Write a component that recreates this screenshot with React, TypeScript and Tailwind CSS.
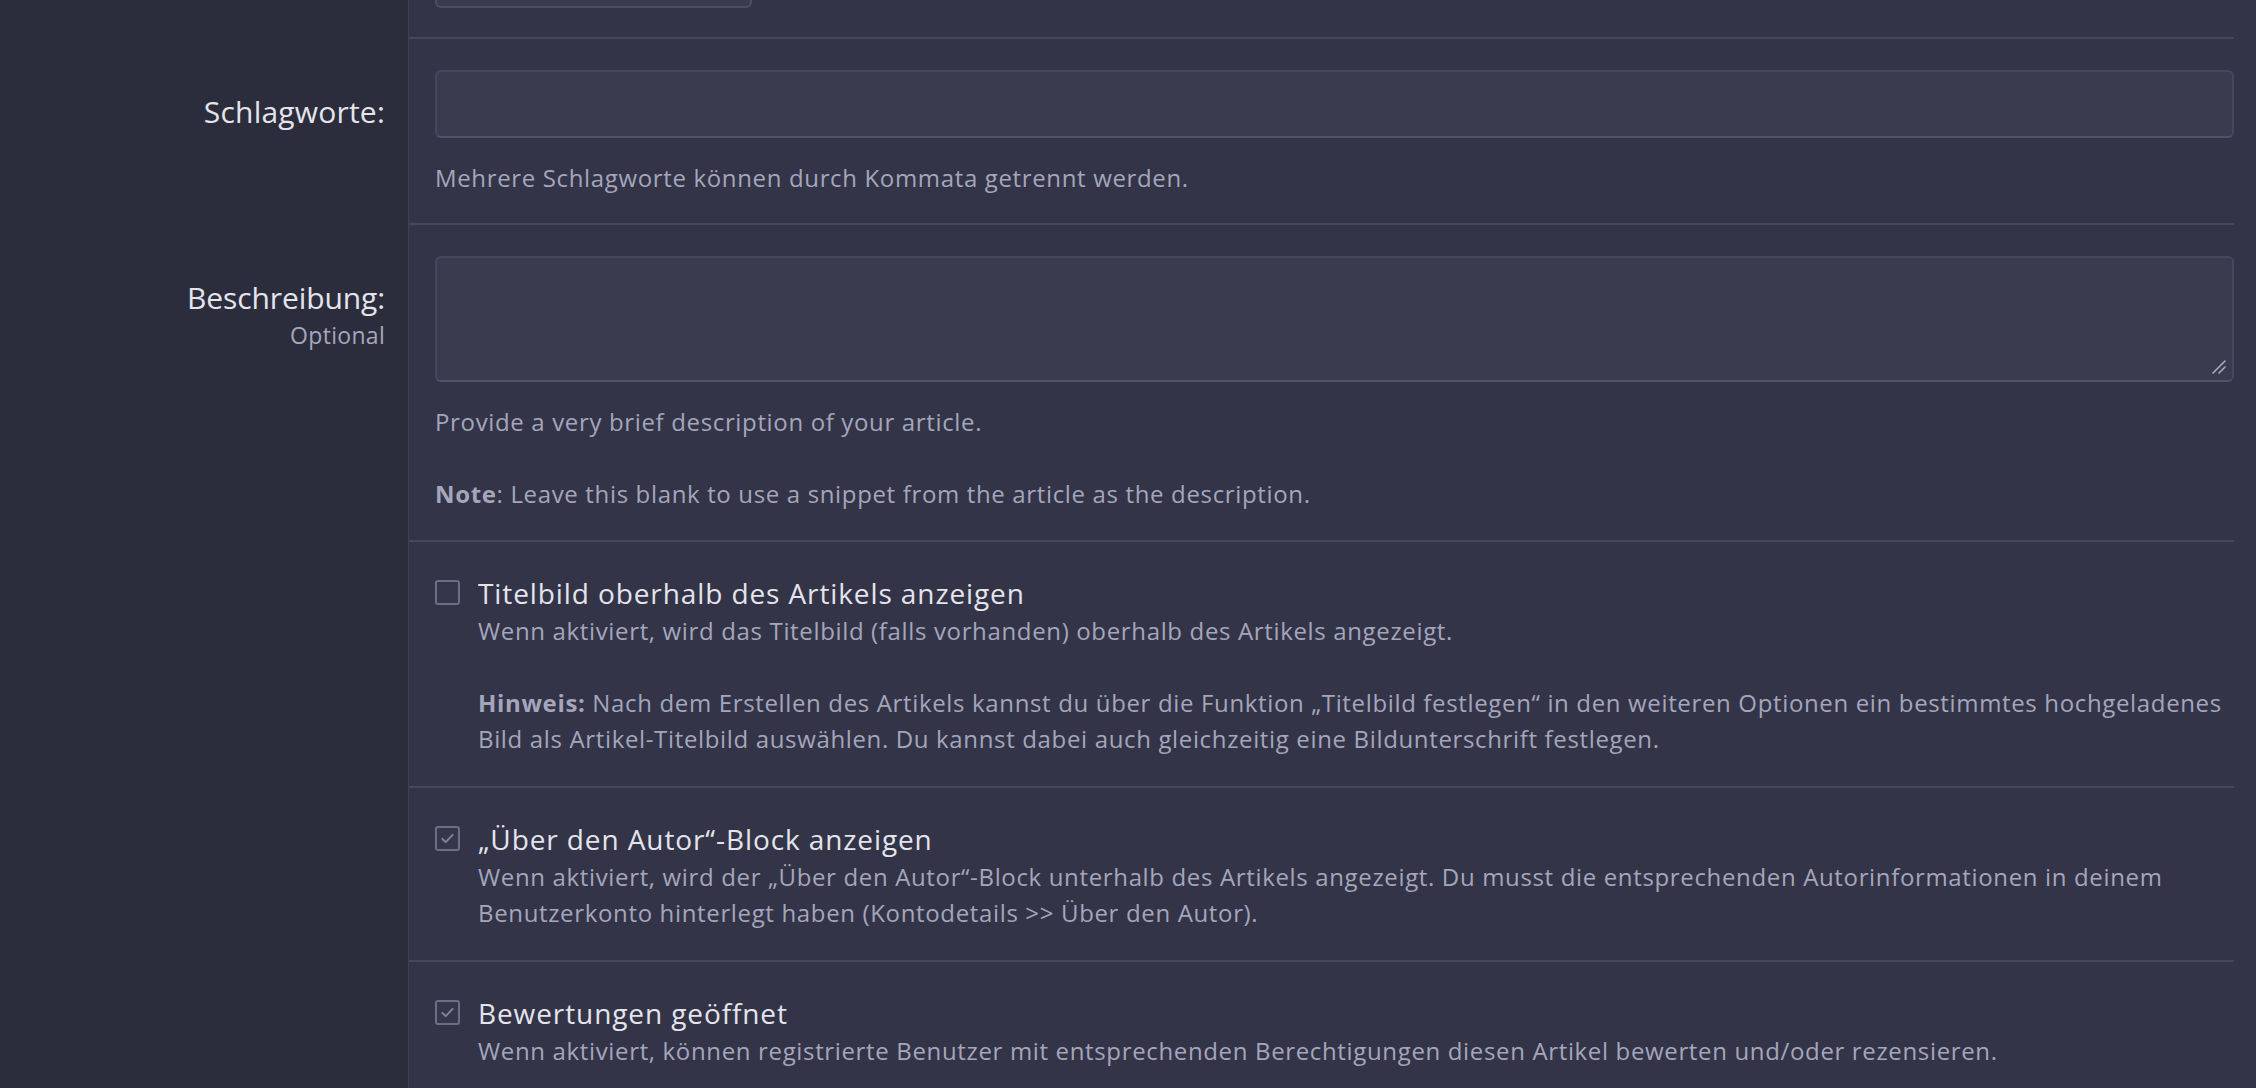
import type { ReactNode } from 'react';

const font = { fontFamily: '"Open Sans", Lato, sans-serif' };

interface OptionRow {
  title: string;
  checked: boolean;
  body: ReactNode;
}

const options: OptionRow[] = [
  {
    title: 'Titelbild oberhalb des Artikels anzeigen',
    checked: false,
    body: (
      <>
        Wenn aktiviert, wird das Titelbild (falls vorhanden) oberhalb des Artikels angezeigt.
        <br />
        <br />
        <b className="font-bold">Hinweis:</b> Nach dem Erstellen des Artikels kannst du über die Funktion
        „Titelbild festlegen“ in den weiteren Optionen ein bestimmtes hochgeladenes Bild als
        Artikel-Titelbild auswählen. Du kannst dabei auch gleichzeitig eine Bildunterschrift festlegen.
      </>
    ),
  },
  {
    title: '„Über den Autor“-Block anzeigen',
    checked: true,
    body: (
      <>
        Wenn aktiviert, wird der „Über den Autor“-Block unterhalb des Artikels angezeigt. Du musst die
        entsprechenden Autorinformationen in deinem Benutzerkonto hinterlegt haben (Kontodetails &gt;&gt;
        Über den Autor).
      </>
    ),
  },
  {
    title: 'Bewertungen geöffnet',
    checked: true,
    body: (
      <>
        Wenn aktiviert, können registrierte Benutzer mit entsprechenden Berechtigungen diesen Artikel
        bewerten und/oder rezensieren.
      </>
    ),
  },
];

function Row({ label, children }: { label?: ReactNode; children: ReactNode }) {
  return (
    <div className="flex">
      <div className="w-[409px] shrink-0 bg-[#2c2d3c] border-r border-[#3e4053] pr-[23px] pt-[53px] text-right">
        {label}
      </div>
      <div className="flex-1 pr-[22px]">
        <div className="border-b-2 border-[#45475a] pl-[26px]">{children}</div>
      </div>
    </div>
  );
}

function Checkbox({ checked }: { checked: boolean }) {
  return (
    <span className="mt-[7px] flex h-[25px] w-[25px] shrink-0 items-center justify-center rounded-[3px] border-2 border-[#6b6d89] bg-[#34364a]">
      {checked && (
        <svg viewBox="0 0 16 16" className="h-[17px] w-[17px]" fill="none">
          <path d="M3.2 8.4l3.1 3 6.5-6.8" stroke="#7f81a1" strokeWidth="1.9" strokeLinecap="round" strokeLinejoin="round" />
        </svg>
      )}
    </span>
  );
}

export default function App() {
  return (
    <div className="min-h-screen bg-[#333447] text-[24px] leading-[36px] tracking-[0.65px] text-[#a4a6bc]" style={font}>
      {/* tail of the field above */}
      <div className="flex h-[39px]">
        <div className="w-[409px] shrink-0 bg-[#2c2d3c] border-r border-[#3e4053]" />
        <div className="flex-1 pr-[22px]">
          <div className="h-full border-b-2 border-[#45475a] pl-[26px]">
            <div className="h-[8px] w-[317px] rounded-b-[6px] border-2 border-t-0 border-[#4c4e65] bg-[#393b4f]" />
          </div>
        </div>
      </div>

      <Row label={<div className="text-[30px] leading-[40px] tracking-[0.2px] text-[#e4e4ec]">Schlagworte:</div>}>
        <div className="pt-[31px] pb-[27px]">
          <input
            type="text"
            className="block h-[68px] w-full rounded-[6px] border-2 border-[#45475d] border-b-[#50526b] bg-[#393b4f] px-4 outline-none"
          />
          <p className="mt-[22px]">Mehrere Schlagworte können durch Kommata getrennt werden.</p>
        </div>
      </Row>

      <Row
        label={
          <>
            <div className="text-[30px] leading-[40px] tracking-[-0.1px] text-[#e4e4ec]">Beschreibung:</div>
            <div className="text-[23px] leading-[34px] tracking-[0.3px] text-[#a4a6bc]">Optional</div>
          </>
        }
      >
        <div className="pt-[31px] pb-[28px]">
          <div className="relative">
            <textarea className="block h-[126px] w-full resize-none rounded-[6px] border-2 border-[#45475d] border-b-[#50526b] bg-[#393b4f] px-4 outline-none" />
            <svg viewBox="0 0 16 16" className="pointer-events-none absolute bottom-[7px] right-[7px] h-[16px] w-[16px]">
              <path d="M2 14L14 2M8 14l6-6" stroke="#a9abbf" strokeWidth="1.6" strokeLinecap="round" />
            </svg>
          </div>
          <p className="mt-[22px]">
            Provide a very brief description of your article.
            <br />
            <br />
            <b className="font-bold">Note</b>: Leave this blank to use a snippet from the article as the description.
          </p>
        </div>
      </Row>

      {options.map((opt) => (
        <Row key={opt.title}>
          <div className="flex gap-[18px] pt-[31px] pb-[29px]">
            <Checkbox checked={opt.checked} />
            <div>
              <div className="text-[28px] leading-[40px] tracking-[0.9px] text-[#e4e4ec]">{opt.title}</div>
              <p>{opt.body}</p>
            </div>
          </div>
        </Row>
      ))}
    </div>
  );
}
